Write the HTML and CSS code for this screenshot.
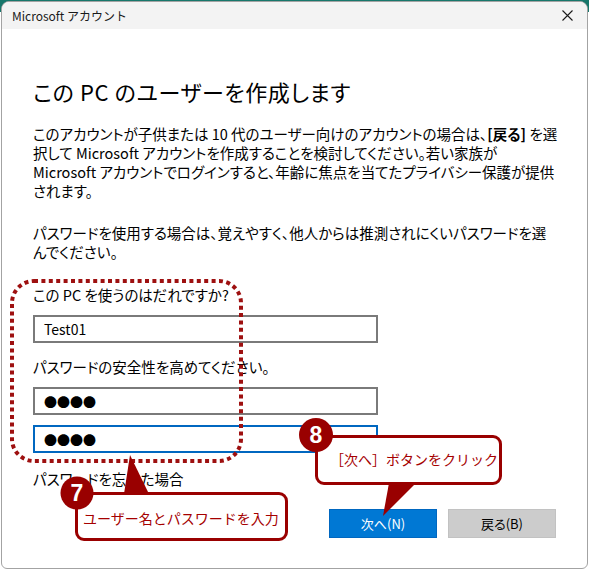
FILE: index.html
```html
<!DOCTYPE html>
<html lang="ja">
<head>
<meta charset="utf-8">
<title>Microsoft アカウント</title>
<link rel="stylesheet" href="styles.css">
</head>
<body>
<div class="window">
  <div class="titlebar">
    <span class="title">Microsoft アカウント</span>
    <svg class="close" width="11" height="11" viewBox="0 0 11 11"><path d="M0.5 0.5L10.5 10.5M10.5 0.5L0.5 10.5" stroke="#1a1a1a" stroke-width="1.1" fill="none"/></svg>
  </div>
  <div class="content">
    <h1 class="heading">この PC のユーザーを作成します</h1>
    <p class="para">このアカウントが子供または 10 代のユーザー向けのアカウントの場合は、<b>[戻る]</b> を選<br>択して Microsoft アカウントを作成することを検討してください。若い家族が<br>Microsoft アカウントでログインすると、年齢に焦点を当てたプライバシー保護が提供<br>されます。</p>
    <p class="para para2">パスワードを使用する場合は、覚えやすく、他人からは推測されにくいパスワードを選<br>んでください。</p>
    <div class="label label1">この PC を使うのはだれですか?</div>
    <div class="field">Test01</div>
    <div class="label label2">パスワードの安全性を高めてください。</div>
    <div class="field pw">●●●●</div>
    <div class="field pw focus">●●●●</div>
    <div class="forgot">パスワードを忘れた場合</div>
    <div class="buttons">
      <div class="btn primary">次へ(N)</div>
      <div class="btn secondary">戻る(B)</div>
    </div>
  </div>
</div>
<div class="callout c7">ユーザー名とパスワードを入力</div>
<div class="callout c8">［次へ］ボタンをクリック</div>
<svg class="annot" width="589" height="571" viewBox="0 0 589 571">
  <rect x="12" y="281" width="229" height="180" rx="22" ry="22" fill="none" stroke="#9e1010" stroke-width="4" stroke-dasharray="4 3.4"/>
  <polygon points="124,494 130,455 149,494" fill="#990000"/>
  <polygon points="389,483 383,516 416,483" fill="#990000"/>
  <circle cx="77" cy="493" r="16.5" fill="#990000"/>
  <circle cx="316" cy="435" r="17" fill="#990000"/>
  <text x="77" y="501" class="num" text-anchor="middle">7</text>
  <text x="316" y="443" class="num" text-anchor="middle">8</text>
</svg>
</body>
</html>
```
FILE: styles.css
```css
html, body {
  margin: 0;
}
body {
  box-sizing: border-box;
  width: 589px;
  height: 571px;
  padding: 1px 0 0 1px;
  position: relative;
  overflow: hidden;
  background: linear-gradient(#17776b 0 12px, #ffffff 12px);
  font-family: "Noto Sans CJK JP", "Noto Sans", sans-serif;
  color: #000;
}
.window {
  box-sizing: border-box;
  width: 587px;
  height: 568px;
  border: 1px solid #a3a3a3;
  border-radius: 8px 8px 6px 6px;
  background: #fff;
  overflow: hidden;
}
.titlebar {
  height: 27px;
  background: #f3f3f3;
  display: flex;
  align-items: center;
  justify-content: space-between;
  padding: 0 14px 0 10px;
  font-size: 12px;
  color: #1a1a1a;
}
.content {
  padding: 0 31px;
  font-size: 14.5px;
  font-feature-settings: "palt";
}
.heading {
  margin: 47px 0 0;
  font-size: 22px;
  line-height: 30px;
  font-weight: 400;
  letter-spacing: 0.6px;
}
.para {
  margin: 18px 0 0;
  line-height: 19px;
  white-space: nowrap;
}
.para b {
  font-weight: 700;
}
.para2 {
  margin-top: 23px;
}
.label {
  line-height: 19px;
}
.label1 {
  margin-top: 24px;
}
.label2 {
  margin-top: 14px;
}
.field {
  box-sizing: border-box;
  width: 345px;
  height: 28px;
  margin-top: 10px;
  border: 2px solid #7a7a7a;
  padding-left: 9px;
  display: flex;
  align-items: center;
  font-size: 14px;
}
.label + .field {
  margin-top: 11px;
}
.pw {
  font-size: 13px;
  letter-spacing: 0;
}
.focus {
  border-color: #0067c0;
}
.forgot {
  margin-top: 16px;
  line-height: 19px;
}
.buttons {
  margin-top: 21px;
  display: flex;
  justify-content: flex-end;
  gap: 11px;
}
.btn {
  box-sizing: border-box;
  width: 108px;
  height: 29px;
  display: flex;
  align-items: center;
  justify-content: center;
  font-size: 13px;
}
.primary {
  background: #0078d4;
  border: 1px solid #0067c0;
  color: #fff;
}
.secondary {
  background: #cccccc;
  border: 1px solid #c2c2c2;
  color: #000;
}
.callout {
  position: absolute;
  box-sizing: border-box;
  border: 3px solid #990000;
  border-radius: 9px;
  background: #fff;
  display: flex;
  align-items: center;
  font-family: "Noto Sans CJK JP", sans-serif;
  font-size: 14px;
  color: #a50000;
  white-space: nowrap;
}
.c7 {
  left: 75px;
  top: 492px;
  width: 213px;
  height: 49px;
  padding: 3px 0 0 5px;
}
.c8 {
  left: 315px;
  top: 435px;
  width: 187px;
  height: 50px;
  padding: 0 0 3px 12px;
}
.annot {
  position: absolute;
  left: 0;
  top: 0;
}
.num {
  font-family: "Liberation Sans", Arial, sans-serif;
  font-weight: 700;
  font-size: 23px;
  fill: #fff;
}
```
